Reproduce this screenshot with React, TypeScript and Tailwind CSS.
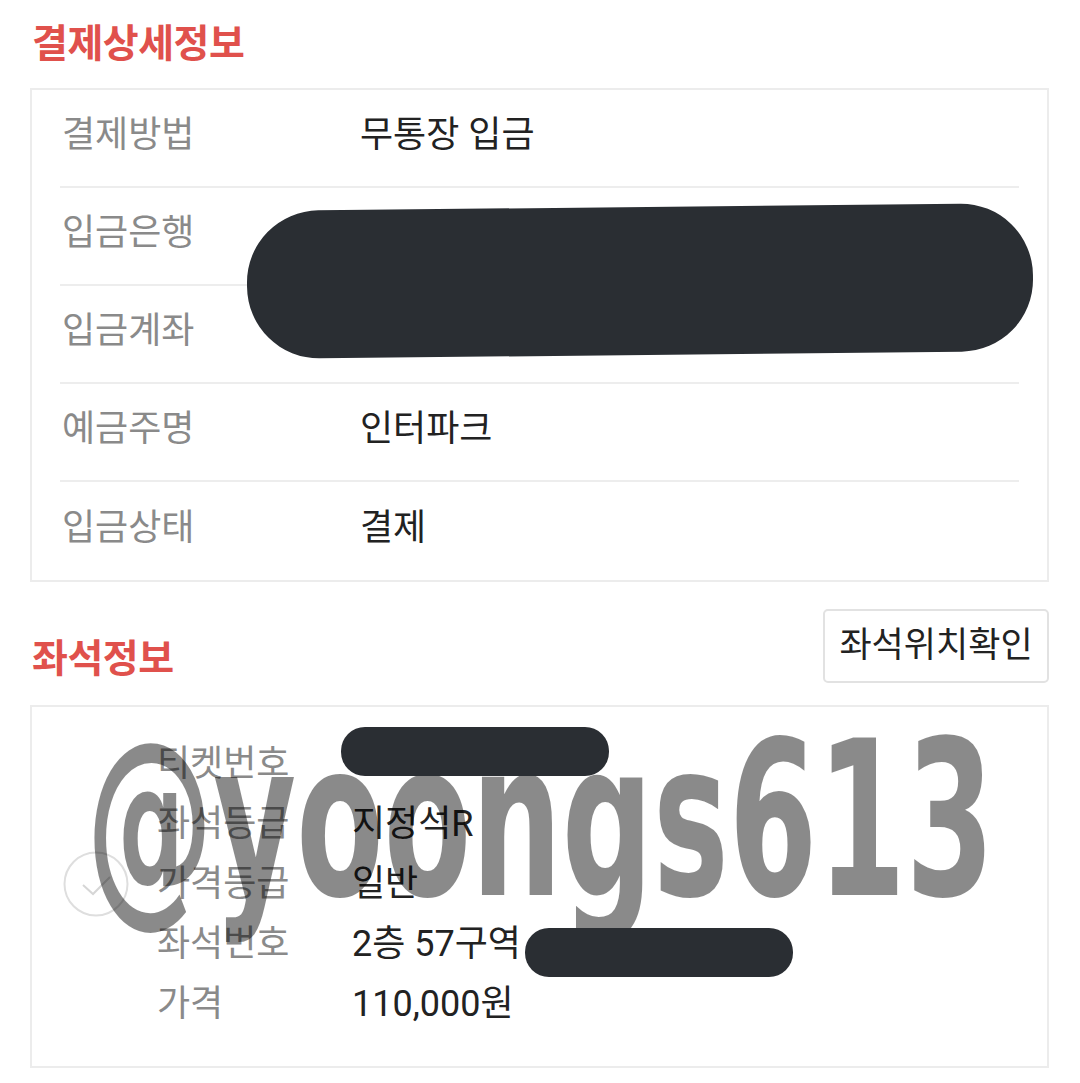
import type { ReactNode } from "react";

const payRows = [
  { label: "결제방법", value: "무통장 입금" },
  { label: "입금은행", value: "" },
  { label: "입금계좌", value: "" },
  { label: "예금주명", value: "인터파크" },
  { label: "입금상태", value: "결제" },
];

const seatRows = [
  { label: "티켓번호", value: "" },
  { label: "좌석등급", value: "지정석R" },
  { label: "가격등급", value: "일반" },
  { label: "좌석번호", value: "2층 57구역" },
  { label: "가격", value: "110,000원" },
];

const font = { fontFamily: 'Roboto, "Noto Sans CJK KR", sans-serif' };

function SectionTitle({ children }: { children: ReactNode }) {
  return (
    <h2 className="pl-[2px] text-[39px] font-bold leading-[52px] tracking-[-0.5px] text-[#e0514c]">
      {children}
    </h2>
  );
}

function CheckCircle() {
  return (
    <svg width="66" height="66" viewBox="0 0 66 66" className="shrink-0">
      <circle cx="33" cy="33" r="31.5" fill="none" stroke="#dedede" strokeWidth="2" />
      <path d="M20 34 L30 43 L47 26" fill="none" stroke="#d6d6d6" strokeWidth="2" />
    </svg>
  );
}

export default function App() {
  return (
    <div
      className="relative h-[1083px] w-[1080px] overflow-hidden bg-white px-[30px] pr-[31px]"
      style={font}
    >
      {/* 결제상세정보 */}
      <div className="flex h-[88px] items-center">
        <SectionTitle>결제상세정보</SectionTitle>
      </div>
      <div className="border-2 border-[#ececec]">
        {payRows.map((r, i) => (
          <div
            key={r.label}
            className={`mx-[28px] flex h-[98px] items-center pl-[2px] pb-[6px] text-[36px] ${
              i < payRows.length - 1 ? "border-b-2 border-[#ededed]" : ""
            }`}
          >
            <span className="w-[298px] text-[#8a8a8a]">{r.label}</span>
            <span className="text-[#222]">{r.value}</span>
          </div>
        ))}
      </div>

      {/* 좌석정보 */}
      <div className="flex h-[123px] items-end justify-between pb-[20px]">
        <SectionTitle>좌석정보</SectionTitle>
        <button className="mb-[2px] h-[74px] w-[226px] rounded-[5px] border-2 border-[#e2e2e2] text-[35px] text-[#222]">
          좌석위치확인
        </button>
      </div>
      <div className="flex h-[363px] items-center border-2 border-[#ececec] pl-[31px] pb-[6px]">
        <CheckCircle />
        <div className="ml-[28px] flex flex-col text-[36px]">
          {seatRows.map((r) => (
            <div key={r.label} className="flex h-[60px] items-center">
              <span className="w-[195px] text-[#8a8a8a]">{r.label}</span>
              <span className="text-[#222]">{r.value}</span>
            </div>
          ))}
        </div>
      </div>

      {/* watermark */}
      <div
        className="pointer-events-none absolute left-[86px] top-[713px] origin-left scale-x-[0.655] whitespace-nowrap text-[216px] font-bold leading-none text-[rgba(0,0,0,0.46)]"
        style={{ fontFamily: '"DejaVu Sans Condensed", "DejaVu Sans", sans-serif', fontStretch: "condensed" }}
      >
        @yoongs613
      </div>

      {/* redactions */}
      <div className="pointer-events-none absolute left-[247px] top-[207px] h-[148px] w-[786px] -rotate-[0.6deg] rounded-[72px] bg-[#2a2e33]" />
      <div className="pointer-events-none absolute left-[341px] top-[727px] h-[49px] w-[268px] rounded-[24px] bg-[#2a2e33]" />
      <div className="pointer-events-none absolute left-[525px] top-[928px] h-[49px] w-[268px] rounded-[24px] bg-[#2a2e33]" />
    </div>
  );
}
